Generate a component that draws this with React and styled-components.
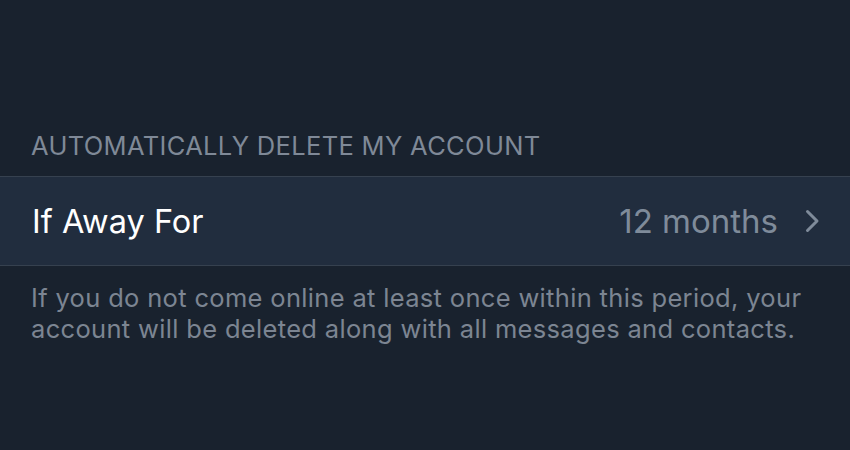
import React from 'react';
import styled, { createGlobalStyle } from 'styled-components';

const GlobalStyle = createGlobalStyle`
  html, body {
    margin: 0;
    padding: 0;
    background: #19222e;
  }
  body {
    font-family: Inter, "Noto Sans", "Liberation Sans", sans-serif;
    -webkit-font-smoothing: antialiased;
  }
`;

const Screen = styled.div`
  width: 850px;
  height: 450px;
  background: #19222e;
  padding-top: 131px;
  box-sizing: border-box;
  overflow: hidden;
`;

const SectionHeader = styled.div`
  padding: 0 31px;
  height: 45px;
  font-size: 25.5px;
  line-height: 30px;
  letter-spacing: 0.33px;
  color: #7f8997;
  white-space: nowrap;
`;

const Row = styled.div`
  display: flex;
  align-items: center;
  height: 88px;
  padding: 0 30px 0 32px;
  background: #212d3e;
  border-top: 1px solid #36414f;
  border-bottom: 1px solid #36414f;
`;

const Label = styled.span`
  flex: 1;
  font-size: 32.5px;
  color: #ffffff;
`;

const Value = styled.span`
  font-size: 33px;
  color: #7f8b9a;
  margin-right: 27px;
`;

const Chevron = styled.svg`
  width: 15px;
  height: 24px;
  flex-shrink: 0;
`;

const Footer = styled.p`
  margin: 0;
  padding: 16px 30px 0 31px;
  font-size: 25.5px;
  line-height: 31px;
  letter-spacing: 0.33px;
  color: #7c8592;
`;

export default function App() {
  return (
    <>
      <GlobalStyle />
      <Screen>
        <SectionHeader>AUTOMATICALLY DELETE MY ACCOUNT</SectionHeader>
        <Row>
          <Label>If Away For</Label>
          <Value>12 months</Value>
          <Chevron viewBox="0 0 15 24">
            <path d="M2.5 2.5 L12 12 L2.5 21.5" fill="none" stroke="#7f8b9a" strokeWidth="3" strokeLinecap="round" strokeLinejoin="round" />
          </Chevron>
        </Row>
        <Footer>
          If you do not come online at least once within this period, your account will be deleted along with all messages and contacts.
        </Footer>
      </Screen>
    </>
  );
}
